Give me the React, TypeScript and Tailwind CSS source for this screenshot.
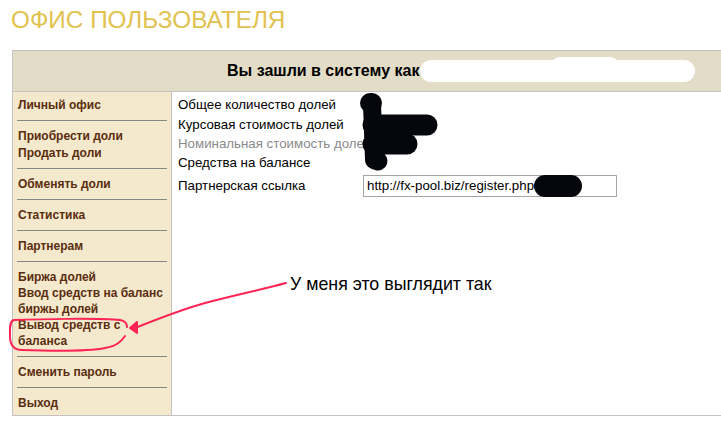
import React from "react";

const Sep = () => <div className="mx-[4px] my-[7px] h-px bg-[#858585]" />;

const Item = ({ lines, tall }: { lines: string[]; tall?: boolean }) => (
  <div className="px-[5px]">
    {lines.map((l, i) => (
      <div
        key={i}
        className={`${tall && i === 0 ? "h-[17px] leading-[17px]" : "h-[16px] leading-[16px]"} whitespace-nowrap`}
      >
        {l}
      </div>
    ))}
  </div>
);

export default function App() {
  const groups: string[][] = [
    ["Личный офис"],
    ["Приобрести доли", "Продать доли"],
    ["Обменять доли"],
    ["Статистика"],
    ["Партнерам"],
    ["Биржа долей", "Ввод средств на баланс", "биржы долей", "Вывод средств с", "баланса"],
    ["Сменить пароль"],
    ["Выход"],
  ];
  const rows: { label: string; gray?: boolean; h: string }[] = [
    { label: "Общее количество долей", h: "h-[21px]" },
    { label: "Курсовая стоимость долей", h: "h-[19px]" },
    { label: "Номинальная стоимость долей", gray: true, h: "h-[19px]" },
    { label: "Средства на балансе", h: "h-[19px]" },
  ];
  return (
    <div
      className="relative w-[721px] h-[429px] overflow-hidden bg-white"
      style={{ fontFamily: '"Liberation Sans", Arial, sans-serif' }}
    >
      <div className="pl-[11px] pt-[6px] h-[50px] text-[24.3px] leading-[28px] text-[#e2c24e] font-light">
        ОФИС ПОЛЬЗОВАТЕЛЯ
      </div>
      <div className="ml-[12px] w-[760px] border border-[#c2c2c2]">
        <div className="h-[41px] bg-[#e3dcc6] border-b border-[#c2c2c2] flex items-center pl-[214px] text-[16px] font-bold text-black">
          Вы зашли в систему как
        </div>
        <div className="flex h-[323px]">
          <div className="w-[159px] shrink-0 bg-[#f4e9cd] border-r border-[#c2c2c2] pt-[5px] text-[12px] font-bold text-[#5a2d0e]">
            {groups.map((g, i) => (
              <React.Fragment key={i}>
                {i > 0 && <Sep />}
                <Item lines={g} tall={g.length === 2} />
              </React.Fragment>
            ))}
          </div>
          <div className="flex-1 bg-white pl-[6px] pt-[2px] text-[13.3px] text-black">
            {rows.map((r, i) => (
              <div key={i} className={`flex ${r.h} items-center`}>
                <div className={`w-[185px] shrink-0 whitespace-nowrap ${r.gray ? "text-[#8a8a8a]" : ""}`}>
                  {r.label}
                </div>
              </div>
            ))}
            <div className="flex h-[28px] items-center">
              <div className="w-[185px] shrink-0 whitespace-nowrap">Партнерская ссылка</div>
              <div className="w-[254px] h-[22px] border border-[#a5a5a5] bg-white pl-[3px] text-[13.3px] leading-[20px] whitespace-nowrap">
                http://fx-pool.biz/register.php
              </div>
            </div>
          </div>
        </div>
      </div>

      {/* redaction marks and annotation overlay */}
      <svg className="absolute left-0 top-0 pointer-events-none" width="721" height="429" viewBox="0 0 721 429">
        <g stroke="#ffffff" strokeLinecap="round" fill="none">
          <line x1="431" y1="71" x2="684" y2="71" strokeWidth="22" />
          <line x1="560" y1="66" x2="610" y2="66" strokeWidth="18" />
        </g>
        <g stroke="#05070d" strokeLinecap="round" fill="none">
          <line x1="370" y1="103" x2="372" y2="103" strokeWidth="20" />
          <line x1="372" y1="104" x2="374" y2="160" strokeWidth="18" />
          <line x1="373" y1="125" x2="427" y2="125" strokeWidth="21" />
          <line x1="373" y1="144" x2="407" y2="144" strokeWidth="21" />
          <line x1="375" y1="160" x2="378" y2="161" strokeWidth="19" />
          <line x1="545" y1="186" x2="571" y2="186" strokeWidth="22" />
        </g>
        <g stroke="#ff2455" strokeWidth="2" fill="none" strokeLinecap="round" strokeLinejoin="round">
          <path d="M120 320 C100 318 40 319 14 320 C9 321 10 330 10 336 C10 346 14 350 22 350 C50 351 90 351 105 348 C118 346 122 340 125 336 M120 320 C125 321 127 324 127 327" />
          <path d="M135 328 C160 318 180 310 205 303 C235 295 260 290 286 283" />
          <path d="M130 328 L137 322 L137 333 Z" fill="#ff2455" />
        </g>
      </svg>
      <div className="absolute left-[290px] top-[273px] text-[17.8px] leading-[22px] text-black">
        У меня это выглядит так
      </div>
    </div>
  );
}
